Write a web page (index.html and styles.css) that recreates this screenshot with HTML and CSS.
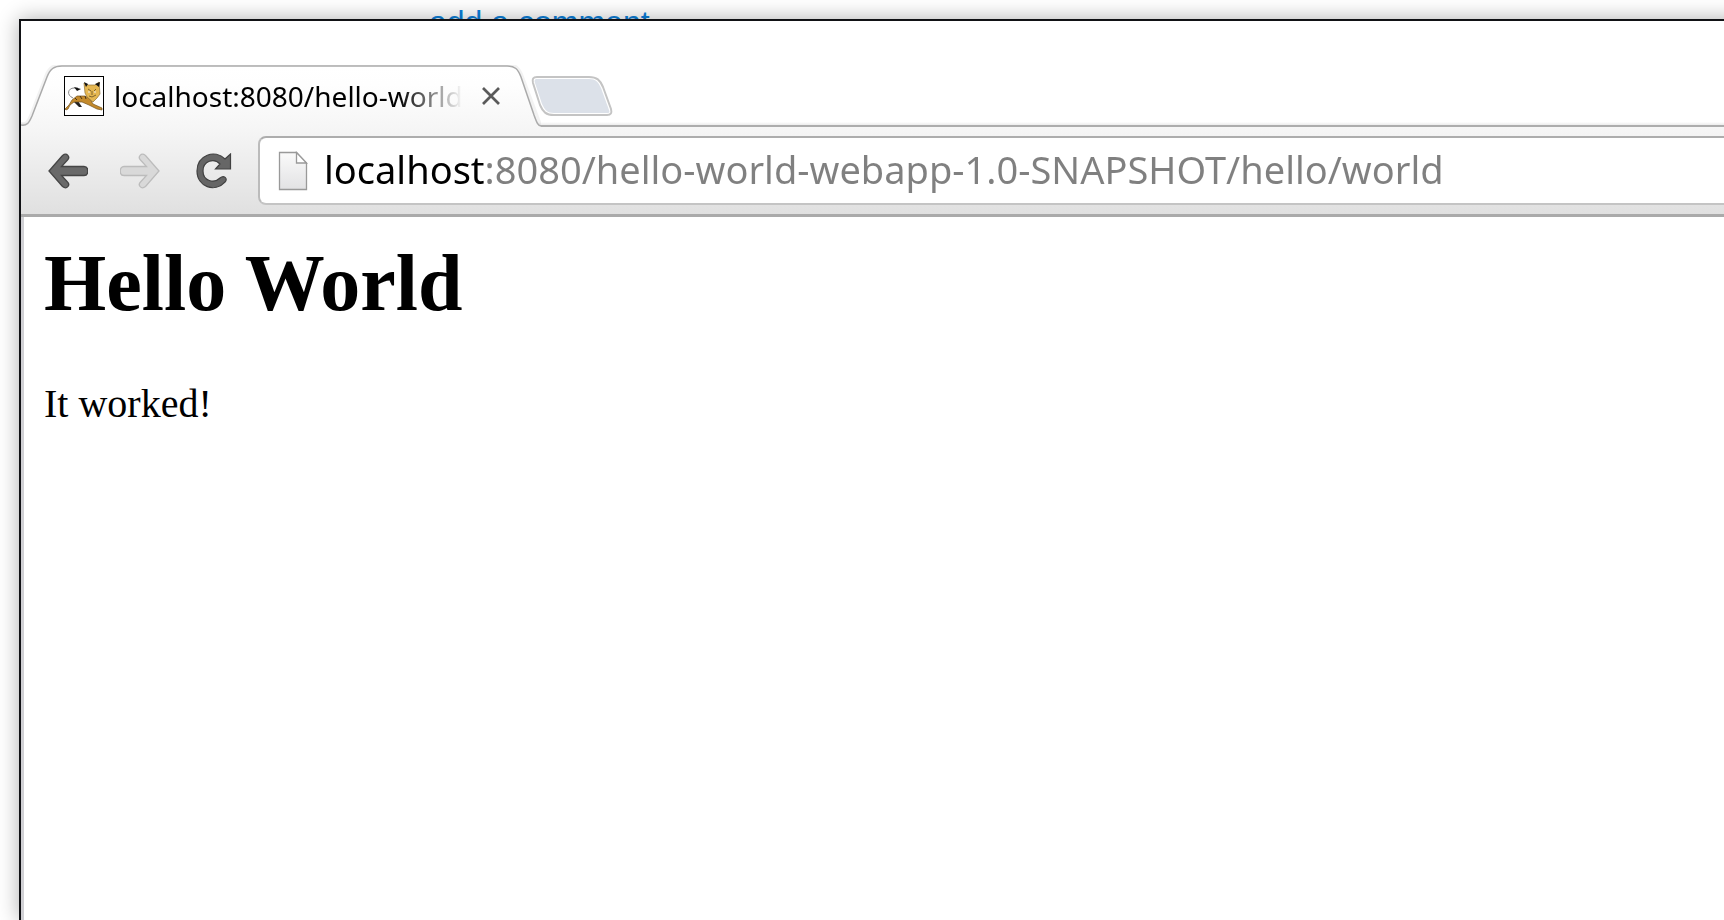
FILE: index.html
```html
<!DOCTYPE html>
<html lang="en">
<head>
<meta charset="utf-8">
<title>localhost:8080/hello-world</title>
<link rel="stylesheet" href="styles.css">
</head>
<body>
<div class="behind"><a class="comment-link" href="#">add a comment</a></div>
<div class="window">
  <div class="tabstrip">
    <div class="tab">
      <svg class="tab-shape" viewBox="0 0 520 62" preserveAspectRatio="none" aria-hidden="true">
        <defs>
          <linearGradient id="tabFill" x1="0" y1="0" x2="0" y2="1"><stop offset="0" stop-color="#fff"/><stop offset=".3" stop-color="#fefefe"/><stop offset="1" stop-color="#f6f6f6"/></linearGradient>
        </defs>
        <path d="M0 62V60C6 61 8 58 11 51L26 12C29 4 33 1 41 1H486C494 1 497 4 500 12L515 52C517 58 518 60 520 60V62Z" fill="none" stroke="#000" stroke-opacity=".05" stroke-width="6"/>
        <path d="M0 62V60C6 61 8 58 11 51L26 12C29 4 33 1 41 1H486C494 1 497 4 500 12L513 50C516 58 517 61 520 61V62Z" fill="url(#tabFill)"/>
        <path d="M0 60C6 61 8 58 11 51L26 12C29 4 33 1 41 1H486C494 1 497 4 500 12L513 50C516 58 517 61 520 61" fill="none" stroke="#aaa" stroke-width="1.5"/>
      </svg>
      <svg class="favicon" viewBox="0 0 40 40" aria-hidden="true">
        <rect x=".5" y=".5" width="39" height="39" fill="#fff" stroke="#000"/>
        <path d="M9 22C2 19 4 12 10 12H14" fill="none" stroke="#888" stroke-width="1"/>
        <path d="M10 11L17 13L13 15Z" fill="#111"/>
        <path d="M9 25L15 31L18 31L14 25Z" fill="#222"/>
        <path d="M1 33L5 29L8 24L13 20L21 20L26 23L29 28L38 32V34L33 33L25 29L18 26L10 26L6 29L4 33L2 34Z" fill="#c48a2b" stroke="#76551f" stroke-width=".7"/>
        <path d="M11 22L13 24M16 20L18 23M21 20L22 23" stroke="#493414" stroke-width="1"/>
        <path d="M20 7L24 9H31L35 6L36 18L33 22L29 26L23 21L21 17Z" fill="#e5b751" stroke="#8f7135" stroke-width=".7"/>
        <path d="M20 6L24 8L22 11ZM36 6L31 8L35 11Z" fill="#111"/>
        <path d="M24 13L27 15M32 13L30 15M28 15V19M25 20L28 21L32 19" fill="none" stroke="#80642c" stroke-width="1"/>
        <path d="M24 16H26M30 16H32" stroke="#eee"/>
      </svg>
      <span class="tab-title">localhost:8080/hello-world</span>
      <button class="icon-button close" aria-label="Close tab">
        <svg width="20" height="20" viewBox="0 0 20 20"><path d="M2 2L18 18M18 2L2 18" stroke="#5a5a5a" stroke-width="2.7"/></svg>
      </button>
    </div>
    <button class="icon-button new-tab" aria-label="New tab">
      <svg width="82" height="42" viewBox="0 0 82 42">
        <path d="M6 2H58C66 2 69 5 72 12L80 34C81 38 80 40 76 40H23C15 40 12 37 9 30L2 8C1 4 2 2 6 2Z" fill="#fff" stroke="#c4c4c4" stroke-width="2"/>
        <path d="M6 4H58C65 4 67 7 70 13L78 35C79 38 78 38 75 38H23C16 38 14 35 11 29L4 8C3 5 4 4 6 4Z" fill="#dce1e9"/>
      </svg>
    </button>
  </div>
  <div class="toolbar">
    <button class="icon-button" aria-label="Back">
      <svg width="40" height="36" viewBox="0 0 40 36"><path d="M1 18L14.500 2.500C19 -1 22.500 4 19.500 7L13.500 13.500H36C41 13.500 41 22.500 36 22.500H13.500L19.500 29C22.500 32 19 37 14.500 33.500Z" fill="#696969" stroke="#454545" stroke-width="1.3"/></svg>
    </button>
    <button class="icon-button forward" aria-label="Forward" disabled>
      <svg width="40" height="36" viewBox="0 0 40 36"><path d="M39 18L25.500 2.500C21 -1 17.500 4 20.500 7L26.500 13.500H4C-1 13.500 -1 22.500 4 22.500H26.500L20.500 29C17.500 32 21 37 25.500 33.500Z" fill="#d9d9d9" stroke="#bcbcbc" stroke-width="1.3"/></svg>
    </button>
    <button class="icon-button reload" aria-label="Reload">
      <svg width="36" height="36" viewBox="0 0 36 36"><path d="M29 6L34.500 1V16H19.500L24 11C18 4.500 7 8 7 18C7 28 18 31 24 25C28 21.500 32 25.500 29 29C19 40 1 34 1 18C1 2 19 -4 29 6Z" fill="#666" stroke="#424242" stroke-width="1.2"/></svg>
    </button>
    <div class="omnibox">
      <svg width="30" height="40" viewBox="0 0 30 40" aria-hidden="true">
        <defs><linearGradient id="page" x1="0" y1="0" x2="0" y2="1"><stop offset="0" stop-color="#fafafa"/><stop offset="1" stop-color="#e2e2e4"/></linearGradient></defs>
        <path d="M1.500 1.500H18.500L28.500 12V38.500H1.500Z" fill="url(#page)" stroke="#999" stroke-width="1.3"/>
        <path d="M18.500 1.500V12H28.500Z" fill="#fff" stroke="#999" stroke-width="1.3"/>
      </svg>
      <input class="address" type="text" aria-label="Address" value="localhost:8080/hello-world-webapp-1.0-SNAPSHOT/hello/world" spellcheck="false">
    </div>
  </div>
  <main class="page">
    <h1>Hello World</h1>
    <p>It worked!</p>
  </main>
</div>
</body>
</html>
```
FILE: styles.css
```css
* { box-sizing: border-box; }
body {
  margin: 0;
  min-height: 100vh;
  display: flex;
  flex-direction: column;
  overflow: hidden;
  background: #fff;
}
.behind {
  height: 19px;
  padding: 4px 0 0 429px;
}
.comment-link {
  font: 32px/36px "Liberation Sans", Arial, sans-serif;
  color: #0c80da;
  text-decoration: none;
}
.window {
  position: relative;
  flex: 1;
  display: flex;
  flex-direction: column;
  margin: 0 -24px 0 19px;
  background: #fff;
  border: solid #111215;
  border-width: 2px 0 0 2px;
  box-shadow: 0 0 20px rgba(0, 0, 0, .32);
}
.icon-button {
  display: flex;
  padding: 0;
  border: 0;
  background: none;
}
.tabstrip {
  display: flex;
  align-items: flex-start;
  padding-top: 44px;
  background: linear-gradient(to top, #adadad 2px, #ececec 2px, #f8f8f8 4px, transparent 5px);
}
.tab {
  position: relative;
  display: flex;
  align-items: center;
  width: 520px;
  height: 62px;
  padding: 0 40px 0 43px;
}
.tab-shape {
  position: absolute;
  inset: 0;
  width: 100%;
  height: 100%;
}
.favicon {
  position: relative;
  width: 40px;
  height: 40px;
}
.tab-title {
  position: relative;
  flex: 1;
  margin: 0 18px 0 10px;
  overflow: hidden;
  white-space: nowrap;
  font: 28px/40px "Noto Sans", "Segoe UI", sans-serif;
  color: #000;
  mask-image: linear-gradient(to left, transparent, #000 64px);
}
.close { position: relative; }
.new-tab { margin: 10px 0 0 -10px; }
.toolbar {
  display: flex;
  align-items: center;
  padding: 9px 0 9px 27px;
  background: linear-gradient(#f6f6f6, #e0e0e0);
  border-bottom: 3px solid #aaa;
}
.forward { margin-left: 32px; }
.reload { margin-left: 36px; }
.omnibox {
  flex: 1;
  display: flex;
  align-items: center;
  height: 69px;
  margin-left: 26px;
  padding-left: 18px;
  background: #fff;
  border: solid #b5b5b5;
  border-color: #adadad #bbb #c4c4c4;
  border-width: 2px 0 2px 2px;
  border-radius: 8px 0 0 8px;
}
.address {
  flex: 1;
  min-width: 0;
  height: 60px;
  margin-left: 16px;
  padding: 0 0 4px;
  border: 0;
  outline: 0;
  font: 38px/56px "Noto Sans", "Segoe UI", sans-serif;
  color: transparent;
  background: linear-gradient(to right, #000 160px, #808080 160px);
  background-clip: text;
}
.page {
  flex: 1;
  padding: 0 20px;
  border-left: 3px solid #d0d0d4;
  font: 40px/46px "Liberation Serif", "Times New Roman", serif;
  color: #000;
}
h1 {
  margin: 20px 0 52px;
  font-size: 80px;
  line-height: 92px;
}
p { margin: 0; }
```
